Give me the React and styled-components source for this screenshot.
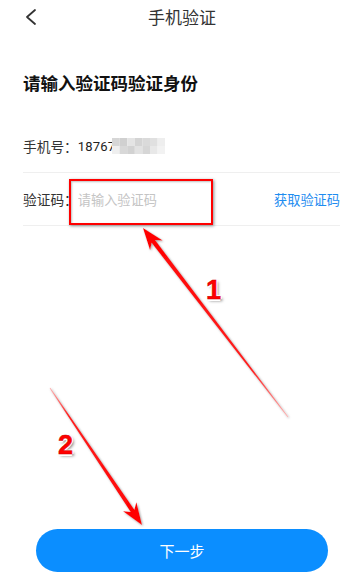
import styled, { createGlobalStyle } from 'styled-components'

const GlobalStyle = createGlobalStyle`
  html, body {
    margin: 0;
    padding: 0;
    background: #fff;
  }
  body {
    font-family: "Noto Sans CJK SC", "Noto Sans", sans-serif;
    color: #333;
  }
`

const mosaic = [
  ['#d6d6d6', '#d0d0d0', '#e4e4e4', '#d4d4d4', '#dadada', '#e0e0e0', '#eeeeee'],
  ['#efefef', '#d8d8d8', '#d2d2d2', '#e2e2e2', '#d6d6d6', '#e8e8e8', '#f2f2f2'],
]

const App = () => {
  return (
    <Page>
      <GlobalStyle />
      <Header>
        <BackButton aria-label="back">
          <svg width="14" height="18" viewBox="0 0 14 18">
            <polyline
              points="11,2 3,9 11,16"
              fill="none"
              stroke="#333"
              strokeWidth="1.8"
              strokeLinecap="round"
              strokeLinejoin="round"
            />
          </svg>
        </BackButton>
        <Title>手机验证</Title>
      </Header>

      <Heading>请输入验证码验证身份</Heading>

      <Form>
        <Row>
          <Label>手机号：</Label>
          <Phone>18767</Phone>
          <Mosaic width="53" height="16" viewBox="0 0 53 16">
            {mosaic.map((row, r) =>
              row.map((c, i) => (
                <rect key={`${r}-${i}`} x={i * 7.6} y={r * 8} width="7.6" height="8" fill={c} />
              ))
            )}
          </Mosaic>
        </Row>
        <Row>
          <Label>验证码：</Label>
          <CodeInput placeholder="请输入验证码" />
          <SendLink>获取验证码</SendLink>
        </Row>
      </Form>

      <Spacer />

      <NextButton>下一步</NextButton>

      <RedBox />
      <Arrows width="360" height="583" viewBox="0 0 360 583">
        <defs>
          <filter id="shade" x="-20%" y="-20%" width="140%" height="140%">
            <feDropShadow dx="1" dy="1" stdDeviation="1" floodColor="#777" floodOpacity="0.7" />
          </filter>
          <linearGradient id="fade1" gradientUnits="userSpaceOnUse" x1="288" y1="417" x2="143" y2="228">
            <stop offset="0" stopColor="#ffb0b0" />
            <stop offset="0.25" stopColor="#ff2020" />
            <stop offset="1" stopColor="#ff0000" />
          </linearGradient>
          <linearGradient id="fade2" gradientUnits="userSpaceOnUse" x1="50" y1="388" x2="142" y2="525">
            <stop offset="0" stopColor="#ffb0b0" />
            <stop offset="0.2" stopColor="#ff2020" />
            <stop offset="1" stopColor="#ff0000" />
          </linearGradient>
        </defs>
        <polygon
          filter="url(#shade)"
          fill="url(#fade1)"
          points="288.3,416.8 155.1,240.1 162.7,240.6 143,228 150.1,250.3 151.6,242.8 287.7,417.2"
        />
        <polygon
          filter="url(#shade)"
          fill="url(#fade2)"
          points="49.67,388.22 130.69,512.11 123.09,511.19 142,525 136.37,502.27 134.35,509.65 50.33,387.78"
        />
      </Arrows>
      <StepNumber $left={206} $top={277}>1</StepNumber>
      <StepNumber $left={58} $top={432}>2</StepNumber>
    </Page>
  )
}

export default App

const Page = styled.div`
  position: relative;
  display: flex;
  flex-direction: column;
  width: 360px;
  height: 583px;
  overflow: hidden;
`

const Header = styled.header`
  position: relative;
  display: flex;
  align-items: center;
  justify-content: center;
  height: 34px;
`

const BackButton = styled.div`
  position: absolute;
  left: 24px;
  top: 8px;
  display: flex;
`

const Title = styled.h1`
  margin: 0 0 0 4px;
  font-size: 17px;
  font-weight: 400;
  color: #333;
  line-height: 34px;
`

const Heading = styled.h2`
  margin: 37px 0 0;
  padding-left: 23px;
  font-size: 17.5px;
  line-height: 24px;
  font-weight: 700;
  color: #111;
`

const Form = styled.div`
  margin: 25px 20px 0 23px;
`

const Row = styled.div`
  display: flex;
  align-items: center;
  height: 52px;
  border-bottom: 1px solid #efefef;
  font-size: 14px;
`

const Label = styled.span`
  color: #333;
  font-size: 13.7px;
`

const Phone = styled.span`
  font-family: Roboto, "Noto Sans", sans-serif;
  font-size: 13px;
  color: #222;
  letter-spacing: 0.2px;
`

const Mosaic = styled.svg`
  margin-left: -3px;
  display: block;
`

const CodeInput = styled.input`
  flex: 1;
  min-width: 0;
  border: none;
  outline: none;
  padding: 0;
  background: transparent;
  font-family: "Noto Sans CJK SC", sans-serif;
  font-size: 13.2px;
  color: #333;

  &::placeholder {
    color: #c4c4c4;
  }
`

const SendLink = styled.span`
  color: #1d8cf0;
  font-size: 13.2px;
`

const Spacer = styled.div`
  flex: 1;
`

const NextButton = styled.button`
  margin: 0 32px 11px 36px;
  height: 43px;
  border: none;
  border-radius: 22px;
  background: #0b8eff;
  color: #fff;
  font-family: "Noto Sans CJK SC", sans-serif;
  font-size: 15px;
`

const RedBox = styled.div`
  position: absolute;
  left: 69px;
  top: 179px;
  width: 140px;
  height: 42px;
  border: 2.5px solid #ff0000;
  box-shadow: 1px 1px 3px rgba(0, 0, 0, 0.45), inset 1px 1px 2px rgba(0, 0, 0, 0.25);
`

const Arrows = styled.svg`
  position: absolute;
  left: 0;
  top: 0;
  pointer-events: none;
`

const StepNumber = styled.span`
  position: absolute;
  left: ${(p) => p.$left}px;
  top: ${(p) => p.$top}px;
  font-family: "Liberation Sans", Arial, sans-serif;
  font-weight: 700;
  font-size: 27px;
  line-height: 27px;
  color: #ff0000;
  -webkit-text-stroke: 0.5px #d00000;
  text-shadow: -1.5px 0 #fff, 1.5px 0 #fff, 0 -1.5px #fff, 0 1.5px #fff,
    2px 2px 3px rgba(0, 0, 0, 0.5);
`
